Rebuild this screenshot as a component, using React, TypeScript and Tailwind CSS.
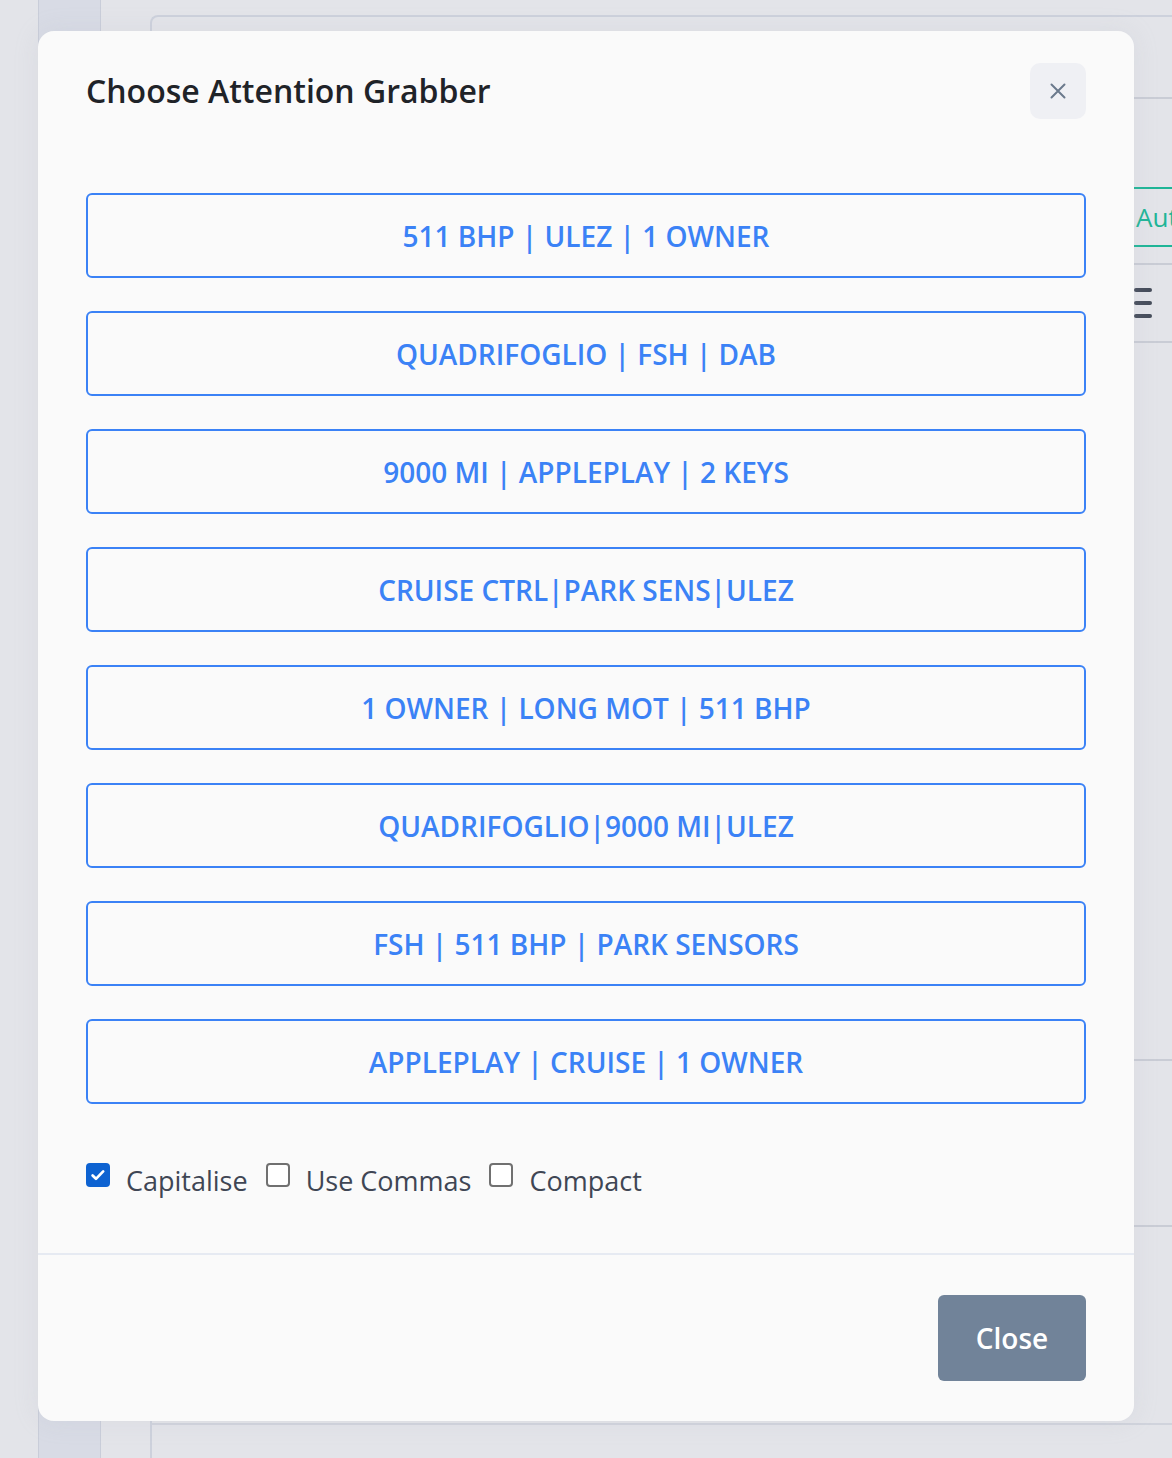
import React, { useState } from 'react';

const grabbers = [
  '511 BHP | ULEZ | 1 OWNER',
  'QUADRIFOGLIO | FSH | DAB',
  '9000 MI | APPLEPLAY | 2 KEYS',
  'CRUISE CTRL|PARK SENS|ULEZ',
  '1 OWNER | LONG MOT | 511 BHP',
  'QUADRIFOGLIO|9000 MI|ULEZ',
  'FSH | 511 BHP | PARK SENSORS',
  'APPLEPLAY | CRUISE | 1 OWNER',
];

const Checkbox: React.FC<{ label: string; checked: boolean; onChange: () => void }> = ({
  label,
  checked,
  onChange,
}) => (
  <label className="flex items-start cursor-pointer" onClick={onChange}>
    {checked ? (
      <span className="mt-[1px] w-[24px] h-[24px] rounded-[4px] bg-[#0d62d1] flex items-center justify-center">
        <svg width="18" height="18" viewBox="0 0 16 16" fill="none">
          <path d="M3.2 8.4l3 3 6.4-6.6" stroke="#fff" strokeWidth="2.4" strokeLinecap="round" strokeLinejoin="round" />
        </svg>
      </span>
    ) : (
      <span className="mt-[1px] w-[24px] h-[24px] rounded-[4px] border-2 border-[#707070] bg-white" />
    )}
    <span className="ml-4 text-[27px] leading-[38px] text-[#3f4654]">{label}</span>
  </label>
);

export default function App() {
  const [opts, setOpts] = useState({ capitalise: true, commas: false, compact: false });

  return (
    <div
      className="relative w-full h-[1458px] bg-[#e3e4e9] overflow-hidden"
      style={{ fontFamily: '"Open Sans", "Noto Sans", sans-serif' }}
    >
      {/* Page behind the overlay */}
      <div className="flex h-full">
        <div className="w-[38px] shrink-0" />
        <div className="w-[63px] shrink-0 bg-[#d8dbe5] border-x border-[#c9cdd9]" />
        <div className="w-[49px] shrink-0" />
        <div className="flex-1 mt-[15px] border-l-2 border-t-2 border-[#cdd1dc] rounded-tl-[8px] flex flex-col">
          <div className="h-[82px] border-b-2 border-[#c9ccd5]" />
          <div className="flex justify-end mt-[88px]">
            <div className="w-[38px] h-[60px] border-y-2 border-[#1fb597] flex items-center pl-[2px] text-[26px] text-[#1fb597] overflow-hidden whitespace-nowrap">
              Aut
            </div>
          </div>
          <div className="mt-[16px] border-t-2 border-[#c9ccd5] flex justify-end">
            <div className="w-[38px] h-[76px] flex flex-col justify-center gap-[9px]">
              <span className="block w-[18px] h-[4px] rounded-full bg-[#454c5a]" />
              <span className="block w-[18px] h-[4px] rounded-full bg-[#454c5a]" />
              <span className="block w-[18px] h-[4px] rounded-full bg-[#454c5a]" />
            </div>
          </div>
          <div className="border-t-2 border-[#c9ccd5] h-[718px]" />
          <div className="border-t-2 border-[#c9ccd5] h-[166px]" />
          <div className="border-t-2 border-[#c9ccd5] h-[198px]" />
          <div className="border-t-2 border-[#d0d3dc]" />
        </div>
      </div>

      {/* Modal */}
      <div className="absolute left-[38px] top-[31px] w-[1096px] h-[1390px] bg-[#fafafa] rounded-[16px] shadow-[0_0_24px_rgba(170,175,190,0.18)] flex flex-col">
        <div className="px-12 pt-8 h-[88px] flex items-center justify-between">
          <h2 className="text-[32px] font-semibold text-[#1f2328] leading-none">Choose Attention Grabber</h2>
          <button className="w-[56px] h-[56px] rounded-[10px] bg-[#eff0f4] flex items-center justify-center">
            <svg width="20" height="20" viewBox="0 0 20 20" fill="none">
              <path d="M3.5 3.5l13 13M16.5 3.5l-13 13" stroke="#6b7a8c" strokeWidth="2" strokeLinecap="round" />
            </svg>
          </button>
        </div>

        <div className="px-12 pt-[74px] pb-[53px] border-b-2 border-[#e6eaf2]">
          <div className="flex flex-col gap-[33px]">
            {grabbers.map((g) => (
              <button
                key={g}
                className="h-[85px] w-full border-2 border-[#3b82f6] rounded-[6px] text-[#3b82f6] text-[28px] font-semibold flex items-center justify-center"
              >
                {g}
              </button>
            ))}
          </div>
          <div className="mt-[58px] flex items-start gap-[18px]">
            <Checkbox
              label="Capitalise"
              checked={opts.capitalise}
              onChange={() => setOpts({ ...opts, capitalise: !opts.capitalise })}
            />
            <Checkbox
              label="Use Commas"
              checked={opts.commas}
              onChange={() => setOpts({ ...opts, commas: !opts.commas })}
            />
            <Checkbox
              label="Compact"
              checked={opts.compact}
              onChange={() => setOpts({ ...opts, compact: !opts.compact })}
            />
          </div>
        </div>

        <div className="px-12 pt-[40px] flex justify-end">
          <button className="w-[148px] h-[86px] rounded-[6px] bg-[#718399] text-white text-[28px] font-semibold">
            Close
          </button>
        </div>
      </div>
    </div>
  );
}
